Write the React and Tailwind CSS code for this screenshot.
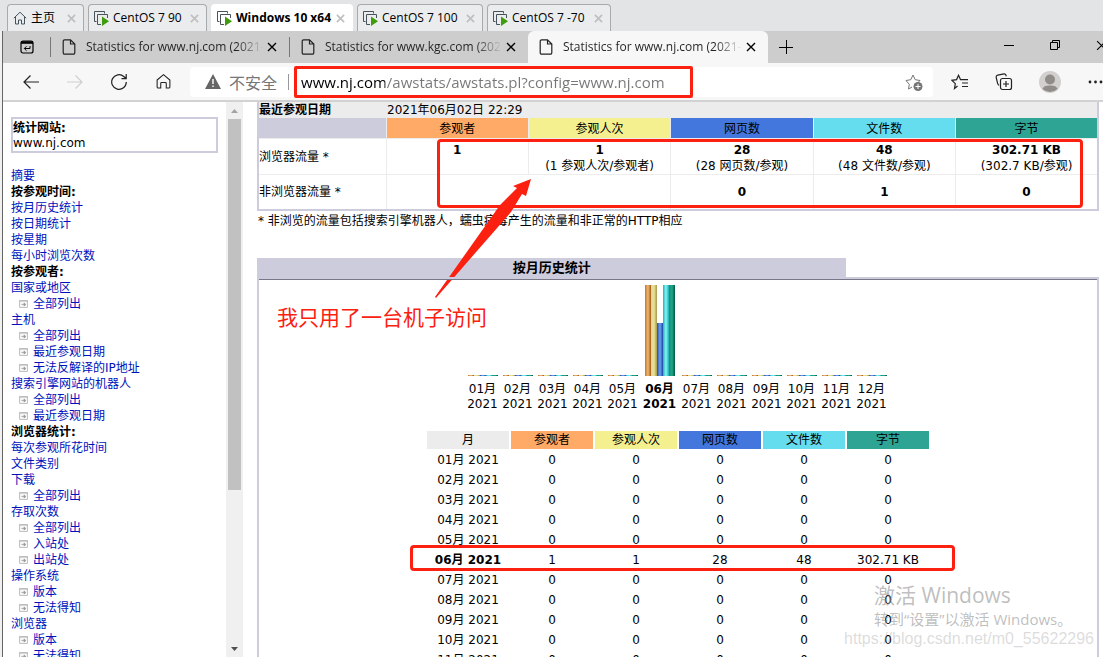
const vmTabs = [
  { name: "主页", home: true, width: "w-[77px]" },
  { name: "CentOS 7 90", width: "w-[119px]" },
  { name: "Windows 10 x64", active: true, width: "w-[142px]" },
  { name: "CentOS 7 100", width: "w-[126px]" },
  { name: "CentOS 7 -70", width: "w-[124px]" },
];

const pageTabs = [
  { title: "Statistics for www.nj.com (2021-0" },
  { title: "Statistics for www.kgc.com (2021" },
  { title: "Statistics for www.nj.com (2021-0", active: true },
];

const menu = [
  { text: "摘要" },
  { text: "按参观时间:", type: "head" },
  { text: "按月历史统计" },
  { text: "按日期统计" },
  { text: "按星期" },
  { text: "每小时浏览次数" },
  { text: "按参观者:", type: "head" },
  { text: "国家或地区" },
  { text: "全部列出", type: "sub" },
  { text: "主机" },
  { text: "全部列出", type: "sub" },
  { text: "最近参观日期", type: "sub" },
  { text: "无法反解译的IP地址", type: "sub" },
  { text: "搜索引擎网站的机器人" },
  { text: "全部列出", type: "sub" },
  { text: "最近参观日期", type: "sub" },
  { text: "浏览器统计:", type: "head" },
  { text: "每次参观所花时间" },
  { text: "文件类别" },
  { text: "下载" },
  { text: "全部列出", type: "sub" },
  { text: "存取次数" },
  { text: "全部列出", type: "sub" },
  { text: "入站处", type: "sub" },
  { text: "出站处", type: "sub" },
  { text: "操作系统" },
  { text: "版本", type: "sub" },
  { text: "无法得知", type: "sub" },
  { text: "浏览器" },
  { text: "版本", type: "sub" },
  { text: "无法得知", type: "sub" },
];

const columns = [
  { name: "参观者", bg: "bg-[#ffaa66]" },
  { name: "参观人次", bg: "bg-[#f4f090]" },
  { name: "网页数", bg: "bg-[#4477dd]" },
  { name: "文件数", bg: "bg-[#66ddee]" },
  { name: "字节", bg: "bg-[#2ea495]" },
];

const viewed = [
  { value: "1", note: "" },
  { value: "1", note: "(1 参观人次/参观者)" },
  { value: "28", note: "(28 网页数/参观)" },
  { value: "48", note: "(48 文件数/参观)" },
  { value: "302.71 KB", note: "(302.7 KB/参观)" },
];

const barColors = [
  "from-[#c07828] via-[#f0b878] to-[#a05800]",
  "from-[#e0d890] via-[#e8e098] to-[#a89848]",
  "from-[#2050b0] via-[#70a0f0] to-[#1848a0]",
  "from-[#20b0b8] via-[#80f8f8] to-[#18a8b0]",
  "from-[#109078] via-[#20a888] to-[#005840]",
];

const months = ["01", "02", "03", "04", "05", "06", "07", "08", "09", "10", "11", "12"].map(
  (m) => ({
    month: m + "月",
    current: m === "06",
    bars: m === "06" ? [91, 91, 53, 91, 91] : [1, 1, 1, 1, 1],
    values: m === "06" ? ["1", "1", "28", "48", "302.71 KB"] : ["0", "0", "0", "0", "0"],
  })
);

const CloseIcon = ({ className }) => (
  <svg viewBox="0 0 10 10" className={className} fill="none" stroke="currentColor">
    <path d="M1 1l8 8M9 1l-8 8" />
  </svg>
);

const HouseIcon = ({ className }) => (
  <svg viewBox="0 0 16 16" className={className} fill="none" stroke="currentColor">
    <path d="M2 6.6 8 1.5l6 5.1V13.2a1 1 0 0 1-1 1h-2.4V9.8a.8.8 0 0 0-.8-.8H6.2a.8.8 0 0 0-.8.8v4.4H3a1 1 0 0 1-1-1z" />
  </svg>
);

const VmHomeIcon = () => (
  <svg viewBox="0 0 14 14" className="size-[14px] shrink-0" fill="none" stroke="#46525c">
    <path d="M.8 7.2 7 1.2l6.2 6M2.5 6v7h3V9h3v4h3V6" />
  </svg>
);

const VmIcon = () => (
  <svg viewBox="0 0 15 15" className="size-[15px] shrink-0" fill="none">
    <path d="M2.5 10.5h-2V.5h10v2" stroke="#46525c" />
    <path d="M7 13.500H3.500v-10h10V7" stroke="#46525c" />
    <path d="M8 5.500V15l7-4.700z" fill="#3f9c0c" />
  </svg>
);

const PageIcon = () => (
  <svg viewBox="0 0 14 16" className="h-4 w-[14px] shrink-0" fill="none" stroke="#222" strokeWidth="1.2">
    <path d="M8.5.8H2.600a1.400 1.400 0 0 0-1.400 1.400v11.600a1.400 1.400 0 0 0 1.400 1.400h8.800a1.400 1.400 0 0 0 1.400-1.400V5zM8.500.8V5h4.300" />
  </svg>
);

const SubIcon = () => (
  <svg viewBox="0 0 9 8" className="h-2 w-[9px] shrink-0" fill="none">
    <path d="M.5.5h8v7h-8z" stroke="#c4c4c4" fill="#f4f4f4" />
    <path d="M0 1h9" stroke="#b4b4b4" />
    <path d="M2.500 4.500h3M5 3l1.800 1.500L5 6z" stroke="#999" fill="#999" strokeWidth=".7" />
  </svg>
);

const VmTabs = () => (
  <div className="flex h-[31px] items-end gap-1 bg-[#e2e4e6] pl-[7px] font-['Open_Sans','Noto_Sans_CJK_SC',sans-serif]">
    {vmTabs.map((tab) => (
      <div
        key={tab.name}
        className={`flex h-[27px] items-center gap-1 rounded-t-sm border border-b-0 pr-[7px] pl-[5px] text-xs whitespace-nowrap text-black ${tab.width} ${
          tab.active ? "border-white bg-white font-bold" : "border-[#a8abae] bg-[#eaecee]"
        }`}
      >
        {tab.home ? <VmHomeIcon /> : <VmIcon />}
        <span className="flex-1">{tab.name}</span>
        <button aria-label="关闭" className="text-[#bfbfbf]">
          <CloseIcon className="size-[9px] stroke-[1.8]" />
        </button>
      </div>
    ))}
  </div>
);

const PageTabs = () => (
  <div className="flex h-8 items-stretch bg-[#cdcdcd] font-['Open_Sans','Noto_Sans_CJK_SC',sans-serif]">
    <button aria-label="标签页操作" className="flex w-[47px] items-center justify-center text-black">
      <svg viewBox="0 0 14 14" className="size-[14px]" fill="none" stroke="currentColor">
        <rect x="1" y="1" width="12" height="12" rx="2" strokeWidth="1.200" />
        <path d="M1 2.500h12" strokeWidth="2.600" />
        <path d="M10 6v2.500H4.500M6.500 6.300 4.300 8.500l2.200 2.200" />
      </svg>
    </button>
    {pageTabs.map((tab, i) => (
      <div
        key={i}
        className={`flex items-center pr-3 pl-[11px] ${
          tab.active ? "w-[240px] rounded-t-md bg-[#f7f7f7]" : "my-1.5 w-[239px] border-l border-[#777]"
        }`}
      >
        <PageIcon />
        <span className="ml-[10px] w-[181px] overflow-hidden bg-linear-to-r from-[#222] from-85% to-transparent bg-clip-text text-xs whitespace-nowrap text-transparent">
          {tab.title}
        </span>
        <button aria-label="关闭标签页" className="ml-1 text-black">
          <CloseIcon className="size-[10px] stroke-[1.4]" />
        </button>
      </div>
    ))}
    <button aria-label="新建标签页" className="flex w-9 items-center justify-center text-black">
      <svg viewBox="0 0 14 14" className="size-[14px]" stroke="currentColor">
        <path d="M7.500 0v14M0 7.500h14" />
      </svg>
    </button>
    <div className="-mr-1 ml-auto flex items-center gap-9 pb-1 text-black">
      <button aria-label="最小化">
        <svg viewBox="0 0 10 10" className="size-[10px]" stroke="currentColor">
          <path d="M0 5.500h10" />
        </svg>
      </button>
      <button aria-label="还原">
        <svg viewBox="0 0 10 10" className="size-[10px]" fill="none" stroke="currentColor">
          <path d="M.5 2.500h7v7h-7zM2.500 2V.5h7v7H8" />
        </svg>
      </button>
      <button aria-label="关闭">
        <CloseIcon className="size-[11px]" />
      </button>
    </div>
  </div>
);

const AddressBar = () => (
  <div className="flex h-[39px] items-center border-b-2 border-[#d2d2d2] bg-[#f7f7f7] text-[#222]">
    <div className="flex items-center gap-7 pl-5">
      <button aria-label="后退">
        <svg viewBox="0 0 16 16" className="size-4" fill="none" stroke="currentColor" strokeWidth="1.2">
          <path d="M16 8H1M7.500 1.500 1 8l6.500 6.500" />
        </svg>
      </button>
      <button aria-label="前进" className="text-[#cfcfcf]">
        <svg viewBox="0 0 16 16" className="size-4" fill="none" stroke="currentColor" strokeWidth="1.2">
          <path d="M0 8h15M8.500 1.500 15 8l-6.500 6.500" />
        </svg>
      </button>
      <button aria-label="刷新">
        <svg viewBox="0 0 16 16" className="size-4" fill="none" stroke="currentColor" strokeWidth="1.200">
          <path d="M15.300 8A7.300 7.300 0 1 1 12.800 2.500L15 4.500M15.200 0v4.700h-4.700" />
        </svg>
      </button>
      <button aria-label="主页">
        <HouseIcon className="size-[17px]" />
      </button>
    </div>
    <div className="relative ml-[18px] flex h-[30px] flex-1 items-center rounded bg-white pl-[15px]">
      <svg viewBox="0 0 16 15" className="h-[15px] w-4 shrink-0">
        <path d="M8 0 16 15H0z" fill="#666" />
        <path d="M8 5v5M8 11.500v1.500" stroke="#fff" strokeWidth="1.400" />
      </svg>
      <label
        htmlFor="url"
        className="ml-2 border-r border-[#999] pr-[11px] font-['Noto_Sans_CJK_SC',sans-serif] text-base leading-4 whitespace-nowrap text-[#767676]"
      >
        不安全
      </label>
      <input
        id="url"
        defaultValue="www.nj.com/awstats/awstats.pl?config=www.nj.com"
        className="ml-3 min-w-0 flex-1 bg-linear-to-r from-black from-[84px] to-[#767676] to-[84px] bg-clip-text pt-0.5 font-['Open_Sans',sans-serif] text-[15px] text-transparent outline-none"
      />
      <button aria-label="收藏" className="mr-2.5 text-[#767676]">
        <svg viewBox="0 0 18 18" className="size-[18px]" fill="none" stroke="currentColor">
          <path d="M7 14 3.500 16l.8-4.600L1 7.500l4.800-.8L8 2l2.200 4.700 4.800.8-1.500 1.500" />
          <circle cx="13" cy="13.500" r="4.500" fill="currentColor" stroke="none" />
          <path d="M13 11v5M10.500 13.500h5" stroke="#fff" />
        </svg>
      </button>
      <div className="pointer-events-none absolute -top-px -bottom-px left-[104px] w-[399px] rounded-xs border-3 border-[#fb2010]" />
    </div>
    <div className="ml-[18px] flex items-center gap-[26px]">
      <button aria-label="收藏夹">
        <svg viewBox="0 0 18 16" className="h-4 w-[18px]" fill="none" stroke="currentColor" strokeWidth="1.200">
          <path d="M6.500 12 3.500 14.500l.8-4.800L1 6.300l4.600-.7L7.500 1.300l2 4.300H17M11 9h6M11 12.500h6" />
        </svg>
      </button>
      <button aria-label="集锦">
        <svg viewBox="0 0 18 18" className="size-[18px]" fill="none" stroke="currentColor" strokeWidth="1.200">
          <path d="M4 12.500 2.700 10.800 1.200 4.500a2 2 0 0 1 1.500-2.400L9 .9a2 2 0 0 1 2 1.300l.4 1" />
          <rect x="5.500" y="5.500" width="11" height="11" rx="2" />
          <path d="M11 8v6M8 11h6" />
        </svg>
      </button>
      <button aria-label="个人资料">
        <svg viewBox="0 0 22 22" className="size-[22px]">
          <circle cx="11" cy="11" r="11" fill="#d2d0ce" />
          <circle cx="11" cy="8.500" r="5" fill="#8f8c89" />
          <path d="M3.500 18c1-3 4-3.500 7.500-3.500s6.500.5 7.500 3.500a11 11 0 0 1-15 0z" fill="#8f8c89" />
        </svg>
      </button>
      <button aria-label="更多">
        <svg viewBox="0 0 16 4" className="h-1 w-4" fill="currentColor">
          <circle cx="3" cy="2" r="1.400" />
          <circle cx="8.500" cy="2" r="1.400" />
          <circle cx="14" cy="2" r="1.400" />
        </svg>
      </button>
    </div>
  </div>
);

const Sidebar = () => (
  <aside className="flex w-[240px] shrink-0 overflow-hidden">
    <div className="flex-1 pt-[15px] pr-2 pl-2">
      <div className="border-2 border-[#ccccdd] pt-0.5 leading-[15px]">
        <p className="font-bold">统计网站:</p>
        <p>www.nj.com</p>
      </div>
      <ul className="mt-[15px] leading-4 text-[#0011bb]">
        {menu.map((item, i) => (
          <li key={i} className="h-4 whitespace-nowrap">
            {item.type === "head" && <span className="font-bold text-black">{item.text}</span>}
            {item.type === "sub" && (
              <span className="flex items-center gap-[5px] pl-2">
                <SubIcon />
                <a href="#">{item.text}</a>
              </span>
            )}
            {!item.type && <a href="#">{item.text}</a>}
          </li>
        ))}
      </ul>
    </div>
    <div className="flex w-[17px] flex-col items-center bg-[#f0f0f0]">
      <svg viewBox="0 0 7 4" className="mt-[7px] h-1 w-[7px]" fill="#a3a3a3">
        <path d="M3.500 0 7 4H0z" />
      </svg>
      <div className="mt-1.5 h-[371px] w-[13px] bg-[#c1c1c1]" />
      <svg viewBox="0 0 7 4" className="mt-auto mb-1.5 h-1 w-[7px]" fill="#505050">
        <path d="M0 0h7L3.500 4z" />
      </svg>
    </div>
  </aside>
);

const Summary = () => (
  <div className="relative">
    <table className="w-full table-fixed border-2 border-t-0 border-[#ccccdd] text-center leading-[15px]">
      <colgroup>
        <col className="w-[128px]" />
        <col span="5" />
      </colgroup>
      <tbody>
        <tr className="h-4 bg-[#ececec] text-left">
          <th className="pt-px">最近参观日期</th>
          <td colSpan="5" className="pt-px pl-px">
            2021年06月02日 22:29
          </td>
        </tr>
        <tr className="h-5">
          <td className="bg-[#ccccdd]"></td>
          {columns.map((c) => (
            <th key={c.name} className={`border-l border-[#ececec] pt-[3px] font-normal ${c.bg}`}>
              {c.name}
            </th>
          ))}
        </tr>
        <tr className="h-9 border-t border-[#ececec]">
          <th className="pt-0.5 text-left font-normal">浏览器流量 *</th>
          {viewed.map((v, i) => (
            <td key={i} className="border-l border-[#ececec] align-top leading-4 whitespace-nowrap">
              <p className="pt-[3px] font-bold">{v.value}</p>
              <p>{v.note}</p>
            </td>
          ))}
        </tr>
        <tr className="h-9 border-t border-[#ececec]">
          <th className="pt-0.5 text-left font-normal">非浏览器流量 *</th>
          <td colSpan="2" className="border-l border-[#ececec]"></td>
          <td className="border-l border-[#ececec] pt-0.5 font-bold">0</td>
          <td className="border-l border-[#ececec] pt-0.5 font-bold">1</td>
          <td className="border-l border-[#ececec] pt-0.5 font-bold">0</td>
        </tr>
      </tbody>
    </table>
    <div className="pointer-events-none absolute top-[37px] right-4 left-[180px] h-[69px] rounded-sm border-3 border-[#fb2010]" />
    <svg viewBox="0 0 98 121" className="pointer-events-none absolute top-[76px] left-[177px] h-[121px] w-[98px]" fill="#fb2010">
      <path d="M1 119 66 27 83 10 79 8 97 1 92 18 88 16 77 34 2 120z" />
    </svg>
  </div>
);

const History = () => (
  <section className="mt-[29px]">
    <h2 className="h-[19px] w-[70%] bg-[#ccccdd] text-center text-[13px] leading-5 font-bold">按月历史统计</h2>
    <div className="relative flex flex-col items-center border-2 border-[#ccccdd]">
      <div className="w-full border-t border-[#777788]" />
      <p className="absolute top-[27px] left-[18px] text-[21px] leading-6 text-[#fb2010]">我只用了一台机子访问</p>
      <div className="mt-[5px] flex pr-0.5">
        {months.map((m) => (
          <div key={m.month} className={`flex flex-col items-center ${m.current ? "w-[39px] font-bold" : "w-[35px]"}`}>
            <div className="flex h-[91px] items-end">
              {m.bars.map((h, i) => (
                <div key={i} className={`w-1.5 bg-linear-to-r ${barColors[i]}`} style={{ height: h }} />
              ))}
            </div>
            <p className="mt-1.5 text-center leading-[15px]">
              {m.month}
              <br />
              2021
            </p>
          </div>
        ))}
      </div>
      <div className="relative mt-[17px]">
        <table className="w-[506px] table-fixed border-separate border-spacing-[2px] text-center leading-[18px]">
          <thead>
            <tr>
              <th className="bg-[#ececec] font-normal">月</th>
              {columns.map((c) => (
                <th key={c.name} className={`font-normal ${c.bg}`}>
                  {c.name}
                </th>
              ))}
            </tr>
          </thead>
          <tbody>
            {months.map((m) => (
              <tr key={m.month} className="h-[18px]">
                <td className={m.current ? "font-bold" : ""}>{m.month} 2021</td>
                {m.values.map((v, i) => (
                  <td key={i}>{v}</td>
                ))}
              </tr>
            ))}
          </tbody>
        </table>
        <div className="pointer-events-none absolute top-[116px] -right-6 -left-[15px] h-[26px] rounded-sm border-3 border-[#fb2010]" />
      </div>
    </div>
  </section>
);

const Watermark = () => (
  <div className="pointer-events-none absolute right-[9px] bottom-[10px] font-['Open_Sans','Noto_Sans_CJK_SC',sans-serif] text-[#888]/55">
    <p className="pl-[30px] text-[21px] leading-6">激活 Windows</p>
    <p className="pl-[30px] text-[15px] leading-6">转到“设置”以激活 Windows。</p>
    <p className="font-['Liberation_Sans',sans-serif] text-base leading-4 text-[#999]/35">
      https://blog.csdn.net/m0_55622296
    </p>
  </div>
);

const App = () => {
  return (
    <div className="relative flex h-screen flex-col overflow-hidden bg-[#f0f0f0]">
      <VmTabs />
      <div className="ml-0.5 flex min-h-0 flex-1 flex-col border-l border-[#666] bg-white">
        <PageTabs />
        <AddressBar />
        <div className="flex min-h-0 flex-1 overflow-hidden font-['DejaVu_Sans','Noto_Sans_CJK_SC',sans-serif] text-xs text-black">
          <Sidebar />
          <main className="ml-[14px] min-w-0 flex-1 overflow-hidden pr-1">
            <Summary />
            <p className="mt-0.5 pl-px leading-4">* 非浏览的流量包括搜索引擎机器人，蠕虫病毒产生的流量和非正常的HTTP相应</p>
            <History />
          </main>
        </div>
      </div>
      <Watermark />
    </div>
  );
};

export default App;
